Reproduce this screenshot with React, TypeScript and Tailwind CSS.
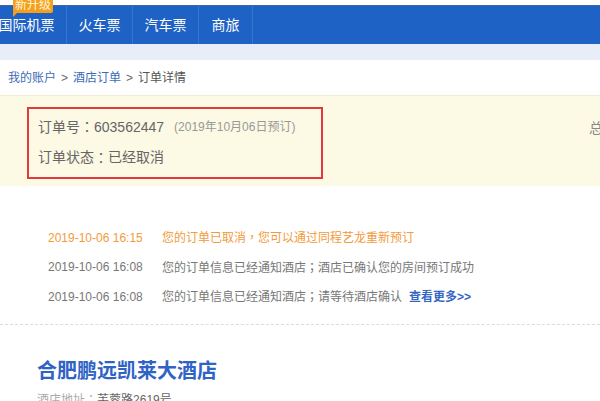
import * as React from 'react';

const NAV = [
  { label: '国际机票', w: 'w-[80px] -ml-[13px]' },
  { label: '火车票', w: 'w-[66px]' },
  { label: '汽车票', w: 'w-[66px]' },
  { label: '商旅', w: 'w-[54px]' },
];

// full-width punctuation sits centred in the original, like the TC glyphs
function P({ c }: { c: string }) {
  return <span className="font-['Noto_Sans_CJK_TC',sans-serif]">{c}</span>;
}

const LOGS = [
  {
    time: '2019-10-06 16:15',
    text: <>您的订单已取消<P c="，" />您可以通过同程艺龙重新预订</>,
    hot: true,
  },
  { time: '2019-10-06 16:08', text: <>您的订单信息已经通知酒店<P c="；" />酒店已确认您的房间预订成功</> },
  { time: '2019-10-06 16:08', text: <>您的订单信息已经通知酒店<P c="；" />请等待酒店确认</>, more: true },
];

export default function App() {
  return (
    <div className="relative h-[401px] w-[600px] overflow-hidden bg-white font-['Liberation_Sans','Noto_Sans_CJK_SC',sans-serif] text-[#555]">
      <div className="h-[5px] bg-white" />

      {/* top nav */}
      <nav className="flex h-[39px] border-t border-[#3d68a6] bg-[#1f62c5]">
        {NAV.map(n => (
          <div
            key={n.label}
            className={`${n.w} flex shrink-0 items-center justify-center border-r border-[#3a74cd] text-[14px] text-white`}
          >
            {n.label}
          </div>
        ))}
      </nav>

      {/* badge over the first tab */}
      <div className="absolute left-[13px] top-[-3px] rounded-[2px] bg-[#f5a01c] px-[2px] text-[12px] leading-[16px] text-[#fff6df]">
        新升级
        <span className="absolute bottom-[-4px] left-0 h-0 w-0 border-r-[5px] border-t-[5px] border-r-transparent border-t-[#f5a01c]" />
      </div>

      <div className="h-[16px] bg-[#e8eef7]" />

      {/* breadcrumb */}
      <div className="flex h-[35px] items-center pl-[8px] text-[12px]">
        <span className="text-[#3d6bb8]">我的账户</span>
        <span className="mx-[5px] text-[#666]">&gt;</span>
        <span className="text-[#3d6bb8]">酒店订单</span>
        <span className="mx-[5px] text-[#666]">&gt;</span>
        <span className="text-[#555]">订单详情</span>
      </div>

      {/* order summary */}
      <div className="flex h-[91px] border-t border-[#f0ecd6] bg-[#fcf9e4]">
        <div className="ml-[27px] mt-[11px] h-[72px] w-[296px] shrink-0 border-2 border-[#e0393e] pl-[9px] pt-[6px]">
          <div className="flex h-[24px] items-center whitespace-nowrap">
            <span className="text-[14px] text-[#666]">订单号<P c="：" />603562447</span>
            <span className="ml-[10px] text-[12px] text-[#999]">(2019年10月06日预订)</span>
          </div>
          <div className="mt-[6px] flex h-[24px] items-center text-[14px] text-[#666]">订单状态<P c="：" />已经取消</div>
        </div>
        <div className="ml-[266px] mt-[22px] shrink-0 whitespace-nowrap text-[14px] text-[#888]">总金额</div>
      </div>

      {/* log */}
      <div className="pl-[48px] pt-[37px] text-[12px]">
        {LOGS.map((l, i) => (
          <div key={i} className="flex h-[29.5px] items-center whitespace-nowrap">
            <span className={`w-[114px] shrink-0 ${l.hot ? 'text-[#f29b3a]' : 'text-[#777]'}`}>{l.time}</span>
            <span className={l.hot ? 'text-[#f29b3a]' : 'text-[#777]'}>{l.text}</span>
            {l.more && <span className="ml-[7px] font-bold text-[#3566c4]">查看更多&gt;&gt;</span>}
          </div>
        ))}
      </div>

      <div className="mt-[12px] border-t border-dashed border-[#dcdcdc]" />

      {/* hotel */}
      <div className="pl-[37px] pt-[32px]">
        <div className="text-[20px] font-bold leading-[28px] text-[#2f63c6]">合肥鹏远凯莱大酒店</div>
        <div className="mt-[6px] text-[12px] leading-[16px]">
          <span className="text-[#aaa]">酒店地址<P c="：" /></span>
          <span className="text-[#666]">芙蓉路2619号</span>
        </div>
      </div>
    </div>
  );
}
